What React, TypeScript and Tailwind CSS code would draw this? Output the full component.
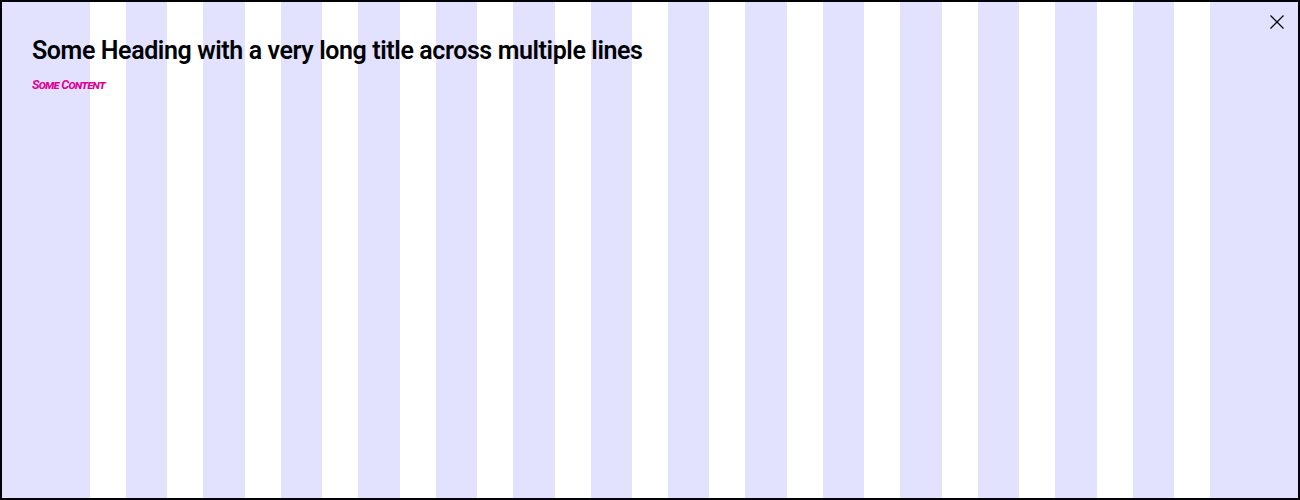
import React from "react";

export default function App() {
  const cols = Array.from({ length: 14 });
  return (
    <div className="relative h-[500px] w-[1300px] overflow-hidden border-2 border-[#010205] bg-white">
      <div className="absolute inset-0 grid grid-cols-[88px_repeat(14,minmax(0,1fr))_88px] gap-x-[36px]">
        <div className="bg-[#e2e2ff]" />
        {cols.map((_, i) => (
          <div key={i} className="bg-[#e2e2ff]" />
        ))}
        <div className="bg-[#e2e2ff]" />
      </div>
      <button className="absolute right-[14px] top-[13px] flex h-[14px] w-[14px] items-center justify-center text-[#010205]">
        <svg width="14" height="14" viewBox="0 0 14 14" fill="none" stroke="currentColor" strokeWidth="1.2">
          <path d="M0.5 0.5 L13.5 13.5 M13.5 0.5 L0.5 13.5" />
        </svg>
      </button>
      <div className="relative flex flex-col pl-[30px] pt-[33px]" style={{ fontFamily: "Roboto, 'Liberation Sans', sans-serif" }}>
        <h2 className="text-[25px] font-semibold leading-[32px] tracking-[-0.4px] text-[#010205]">
          Some Heading with a very long title across multiple lines
        </h2>
        <p className="mt-[10px] text-[12.5px] font-bold italic leading-[16px] text-[#e00096] [font-variant:small-caps] tracking-[-0.7px]">
          Some Content
        </p>
      </div>
    </div>
  );
}
